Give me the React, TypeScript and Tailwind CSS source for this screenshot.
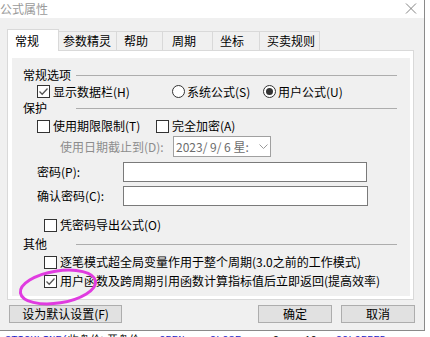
import React from "react";

function Box({ checked }: { checked?: boolean }) {
  return (
    <span className="w-[13px] h-[13px] border border-[#333333] bg-white flex items-center justify-center shrink-0">
      {checked && (
        <svg width="11" height="11" viewBox="0 0 11 11">
          <path d="M1.5 5.5 L4.2 8.2 L9.5 2.5" fill="none" stroke="#555555" strokeWidth="1.3" />
        </svg>
      )}
    </span>
  );
}

function Radio({ on }: { on?: boolean }) {
  return (
    <span className="w-[13px] h-[13px] rounded-full border border-[#333333] bg-white flex items-center justify-center shrink-0">
      {on && <span className="w-[7px] h-[7px] rounded-full bg-[#333333]" />}
    </span>
  );
}

function Header({ label }: { label: string }) {
  return (
    <div className="h-[16px] flex items-center">
      <span className="w-[64px] pl-[11px] shrink-0">{label}</span>
      <span className="flex-1 h-px bg-[#adadad] mr-[13px]" />
    </div>
  );
}

export default function App() {
  return (
    <div className="w-[430px] h-[337px] overflow-hidden bg-white text-[12px] leading-none text-black font-['Noto_Sans_CJK_SC','Noto_Sans',sans-serif] relative">
      <div className="flex">
        <div className="w-[425px] h-[331px] shrink-0 border-r border-b border-[#8a8a8a] bg-[#f0f0f0] flex flex-col">
          {/* title bar */}
          <div className="h-[18px] bg-white flex items-center justify-between">
            <span className="text-[#9a9a9a] text-[12px]">公式属性</span>
            <svg width="12" height="11" viewBox="0 0 12 11" className="mr-[7px] mb-[2px]">
              <path d="M1 0.5 L11 10.5 M11 0.5 L1 10.5" stroke="#777777" strokeWidth="0.9" fill="none" />
            </svg>
          </div>
          {/* tabs */}
          <div className="h-[32px] flex items-end pl-[7px]">
            <div className="w-[52px] h-[22px] -mb-px relative z-10 bg-white border border-b-0 border-[#d9d9d9] flex items-center pl-[7px]">
              常规
            </div>
            <div className="w-[58px] h-[19px] border-t border-r border-[#d9d9d9] flex items-center pl-[4px]">参数精灵</div>
            <div className="w-[46px] h-[19px] border-t border-r border-[#d9d9d9] flex items-center pl-[7px]">帮助</div>
            <div className="w-[50px] h-[19px] border-t border-r border-[#d9d9d9] flex items-center pl-[9px]">周期</div>
            <div className="w-[47px] h-[19px] border-t border-r border-[#d9d9d9] flex items-center pl-[7px]">坐标</div>
            <div className="w-[60px] h-[19px] border-t border-r border-[#d9d9d9] flex items-center pl-[7px]">买卖规则</div>
          </div>
          {/* panel */}
          <div className="ml-[7px] w-[407px] h-[250px] border border-[#d9d9d9] bg-white pl-[4px] pt-[7px] pr-[3px] pb-[3px]">
            <div className="h-full bg-[#f0f0f0] flex flex-col pt-[9px]">
              <Header label="常规选项" />
              <div className="h-[17px] flex items-center pl-[25px]">
                <div className="w-[135px] flex items-center gap-[3px]">
                  <Box checked />
                  <span>显示数据栏(H)</span>
                </div>
                <div className="w-[91px] flex items-center gap-[2px]">
                  <Radio />
                  <span>系统公式(S)</span>
                </div>
                <div className="flex items-center gap-[2px]">
                  <Radio on />
                  <span>用户公式(U)</span>
                </div>
              </div>
              <Header label="保护" />
              <div className="h-[20px] flex items-center pl-[25px]">
                <div className="w-[119px] flex items-center gap-[3px]">
                  <Box />
                  <span>使用期限限制(T)</span>
                </div>
                <div className="flex items-center gap-[3px]">
                  <Box />
                  <span>完全加密(A)</span>
                </div>
              </div>
              <div className="h-[21px] flex items-center pl-[48px]">
                <span className="w-[113px] text-[#8d8d8d]">使用日期截止到(D):</span>
                <div className="w-[98px] h-[21px] border border-[#a0a0a0] bg-white flex items-center pl-[2px] pr-[2px] text-[#6d6d6d]">
                  <span className="flex-1 whitespace-pre">2023/ 9/ 6 星:</span>
                  <svg width="9" height="6" viewBox="0 0 9 6">
                    <path d="M0.5 0.5 L4.5 4.5 L8.5 0.5" stroke="#9a9a9a" fill="none" strokeWidth="1" />
                  </svg>
                </div>
              </div>
              <div className="h-[20px] mt-[5px] flex items-center pl-[25px]">
                <span className="w-[86px]">密码(P):</span>
                <div className="w-[244px] h-[20px] border border-[#7a7a7a] bg-white" />
              </div>
              <div className="h-[20px] mt-[4px] flex items-center pl-[25px]">
                <span className="w-[86px]">确认密码(C):</span>
                <div className="w-[245px] h-[20px] border border-[#7a7a7a] bg-white" />
              </div>
              <div className="h-[18px] mt-[10px] flex items-center pl-[32px] gap-[3px]">
                <Box />
                <span>凭密码导出公式(O)</span>
              </div>
              <div className="mt-[2px]">
                <Header label="其他" />
              </div>
              <div className="h-[18px] mt-[1px] flex items-center pl-[32px] gap-[3px]">
                <Box />
                <span>逐笔模式超全局变量作用于整个周期(3.0之前的工作模式)</span>
              </div>
              <div className="h-[18px] mt-[1px] flex items-center pl-[32px] gap-[3px]">
                <Box checked />
                <span>用户函数及跨周期引用函数计算指标值后立即返回(提高效率)</span>
              </div>
            </div>
          </div>
          {/* buttons */}
          <div className="h-[18px] mt-[5px] flex pl-[9px] pr-[9px]">
            <div className="w-[113px] h-full bg-[#e1e1e1] border border-[#adadad] flex items-center justify-center">设为默认设置(F)</div>
            <div className="flex-1" />
            <div className="w-[74px] h-full bg-[#e1e1e1] border border-[#adadad] flex items-center justify-center">确定</div>
            <div className="w-[74px] h-full ml-[9px] bg-[#e1e1e1] border border-[#adadad] flex items-center justify-center">取消</div>
          </div>
        </div>
        <div className="flex-1 bg-white" />
      </div>
      <div className="h-[14px] pl-[5px] pt-[3px] whitespace-pre font-['Liberation_Mono',monospace] text-[10.5px] leading-[12px]">
        <span className="text-[#2323c8]">STICKLINE(</span>
        <span className="text-black">收盘价&gt;开盘价  ,</span>
        <span className="text-[#2323c8]">OPEN</span>
        <span className="text-black">,   </span>
        <span className="text-[#2323c8]">CLOSE</span>
        <span className="text-black">,    9,   10,  </span>
        <span className="text-[#2323c8]">COLORRED</span>
        <span className="text-black">  ;</span>
      </div>
      {/* annotation ellipse */}
      <svg className="absolute left-[16px] top-[264px]" width="86" height="46" viewBox="0 0 86 46">
        <ellipse cx="42" cy="23" rx="38" ry="16" transform="rotate(-9 42 23)" fill="none" stroke="#e03ce0" strokeWidth="3" />
      </svg>
    </div>
  );
}
